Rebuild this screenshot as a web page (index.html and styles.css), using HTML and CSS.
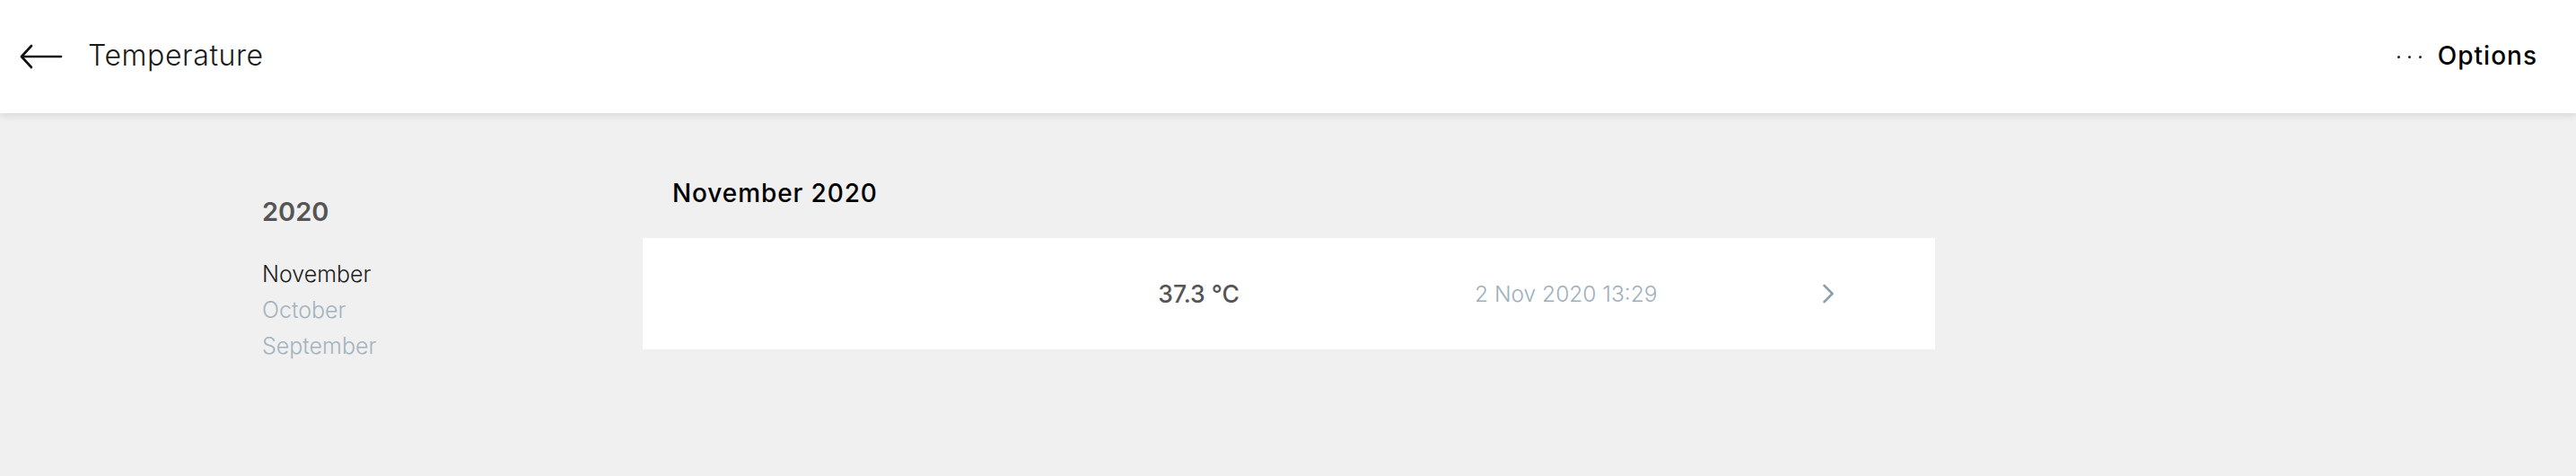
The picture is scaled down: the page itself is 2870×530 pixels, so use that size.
FILE: index.html
```html
<!DOCTYPE html>
<html lang="en">
<head>
<meta charset="utf-8">
<title>Temperature</title>
<link rel="stylesheet" href="styles.css">
</head>
<body>
<header class="topbar">
  <div class="topbar-left">
    <button class="back" aria-label="Back">
      <svg width="48" height="28" viewBox="0 0 48 28" fill="none" stroke="#111" stroke-width="2.6" stroke-linecap="round" stroke-linejoin="round">
        <path d="M2 14 H46"/>
        <path d="M13 2 L2 14 L13 26"/>
      </svg>
    </button>
    <h1 class="title">Temperature</h1>
  </div>
  <button class="options">
    <span class="dots"><i></i><i></i><i></i></span>
    <span class="options-label">Options</span>
  </button>
</header>
<main class="content">
  <nav class="sidebar">
    <div class="year">2020</div>
    <ul class="months">
      <li class="month active">November</li>
      <li class="month">October</li>
      <li class="month">September</li>
    </ul>
  </nav>
  <section class="records">
    <h2 class="records-heading">November 2020</h2>
    <div class="record">
      <div class="record-value">37.3 °C</div>
      <div class="record-date">2 Nov 2020 13:29</div>
      <div class="record-chevron">
        <svg width="14" height="22" viewBox="0 0 14 22" fill="none" stroke="#8d9fac" stroke-width="2.6" stroke-linecap="round" stroke-linejoin="round">
          <path d="M2.5 2 L11.5 11 L2.5 20"/>
        </svg>
      </div>
    </div>
  </section>
</main>
</body>
</html>
```

FILE: styles.css
```css
* {
  box-sizing: border-box;
}

html, body {
  margin: 0;
  padding: 0;
}

body {
  background: #f0f0f0;
  font-family: Inter, "Noto Sans", "DejaVu Sans", sans-serif;
  color: #111;
  width: 2870px;
  height: 530px;
  overflow: hidden;
}

button {
  font: inherit;
  background: none;
  border: 0;
  padding: 0;
  margin: 0;
  cursor: pointer;
  color: inherit;
}

.topbar {
  height: 126px;
  background: #fff;
  box-shadow: 0 2px 9px rgba(0, 0, 0, 0.12);
  display: flex;
  align-items: center;
  justify-content: space-between;
  padding: 0 43px 3px 22px;
  position: relative;
  z-index: 1;
}

.topbar-left {
  display: flex;
  align-items: center;
  gap: 28px;
}

.back {
  display: flex;
  align-items: center;
  height: 28px;
  margin-top: 3px;
}

.back svg {
  display: block;
}

.title {
  margin: 0;
  font-size: 32px;
  font-weight: 300;
  color: #1a1a1a;
  line-height: 40px;
  letter-spacing: 0.6px;
}

.options {
  display: flex;
  align-items: center;
  gap: 18px;
}

.dots {
  display: flex;
  gap: 9px;
  padding-top: 3px;
}

.dots i {
  display: block;
  width: 3px;
  height: 3px;
  border-radius: 50%;
  background: #222;
}

.options-label {
  font-size: 28px;
  font-weight: 500;
  color: #050505;
  line-height: 36px;
  letter-spacing: 1px;
}

.content {
  display: grid;
  grid-template-columns: 424px 1440px;
  padding: 0 0 0 292px;
}

.sidebar {
  padding-top: 92px;
}

.year {
  font-size: 29px;
  font-weight: 600;
  color: #555;
  line-height: 36px;
}

.months {
  list-style: none;
  margin: 31px 0 0;
  padding: 0;
  display: flex;
  flex-direction: column;
}

.month {
  font-size: 25px;
  font-weight: 300;
  line-height: 40px;
  color: #a4b3be;
}

.month.active {
  color: #222;
}

.records {
  padding-top: 71px;
}

.records-heading {
  margin: 0 0 32px;
  padding-left: 33px;
  font-size: 28px;
  font-weight: 500;
  line-height: 36px;
  letter-spacing: 0.9px;
  color: #000;
}

.record {
  background: #fff;
  height: 124px;
  display: grid;
  grid-template-columns: 665px 262px 389px 1fr;
  align-items: center;
}

.record-value {
  grid-column: 1;
  text-align: right;
  font-size: 26.5px;
  font-weight: 500;
  color: #555;
  line-height: 34px;
}

.record-date {
  grid-column: 3;
  font-size: 24.5px;
  font-weight: 300;
  color: #9eafbb;
  line-height: 34px;
}

.record-chevron {
  grid-column: 4;
  display: flex;
  align-items: center;
}

.record-chevron svg {
  display: block;
  margin-left: -2px;
}
```
